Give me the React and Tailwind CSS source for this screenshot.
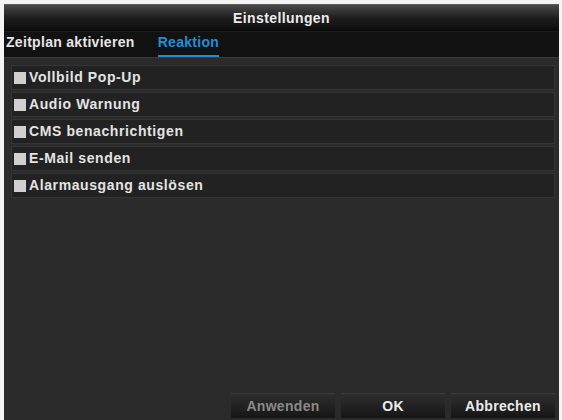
import { useState } from "react";

const options = [
  "Vollbild Pop-Up",
  "Audio Warnung",
  "CMS benachrichtigen",
  "E-Mail senden",
  "Alarmausgang auslösen",
];

export default function App() {
  const [tab, setTab] = useState("reaktion");
  const [checked, setChecked] = useState({});

  return (
    <div
      className="w-[562px] h-[420px] bg-[#f4f4f4] pt-[4px] pl-[4px] pr-[3px] overflow-hidden"
      style={{ fontFamily: '"Liberation Sans", Arial, sans-serif' }}
    >
      <div className="h-full flex flex-col bg-[#2a2a2a] border-t border-[#5a5a5a]">
        {/* title */}
        <div className="h-[26px] flex items-center justify-center bg-gradient-to-b from-[#4a4a4a] via-[#1e1e1e] to-[#0b0b0b] text-[14px] font-bold tracking-[0.4px] text-[#ececec]">
          Einstellungen
        </div>

        {/* tabs */}
        <div className="h-[26px] flex items-center bg-[#121212] border-t border-[#1c1c1c] text-[14px] font-bold tracking-[0.3px]">
          <button
            onClick={() => setTab("zeitplan")}
            className={`ml-[2px] pb-[2px] ${tab === "zeitplan" ? "text-[#1e8fd6] border-b-2 border-[#1e8fd6]" : "text-[#e6e6e6] border-b-2 border-transparent"}`}
          >
            Zeitplan aktivieren
          </button>
          <button
            onClick={() => setTab("reaktion")}
            className={`ml-[23px] pb-[2px] ${tab === "reaktion" ? "text-[#1e8fd6] border-b-2 border-[#1e8fd6]" : "text-[#e6e6e6] border-b-2 border-transparent"}`}
          >
            Reaktion
          </button>
        </div>

        {/* content */}
        <div className="flex-1 flex flex-col bg-[#2b2b2b] border-t border-[#3a3a3a] pt-[7px] pl-[7px] pr-[4px]">
          <div className="flex flex-col gap-[2px]">
            {options.map((o) => (
              <label
                key={o}
                className="h-[25px] flex items-center bg-[#222222] border border-[#353535] pl-[2px] text-[14px] font-bold tracking-[0.6px] text-[#e4e4e4] cursor-pointer"
              >
                <span
                  onClick={() => setChecked((c) => ({ ...c, [o]: !c[o] }))}
                  className="w-[12px] h-[12px] bg-[#d0d0d0] mr-[3px] flex items-center justify-center text-[10px] text-[#222]"
                >
                  {checked[o] ? "✓" : ""}
                </span>
                {o}
              </label>
            ))}
          </div>

          <div className="flex-1" />

          <div className="flex justify-end gap-[6px] pb-[2px]">
            {["Anwenden", "OK", "Abbrechen"].map((b) => (
              <button
                key={b}
                className={`w-[104px] h-[25px] flex items-center justify-center bg-gradient-to-b from-[#2e2e2e] to-[#161616] border-t border-[#3c3c3c] text-[14px] font-bold tracking-[0.3px] ${b === "Anwenden" ? "text-[#8a8a8a]" : "text-[#ececec]"}`}
              >
                {b}
              </button>
            ))}
          </div>
        </div>
      </div>
    </div>
  );
}
